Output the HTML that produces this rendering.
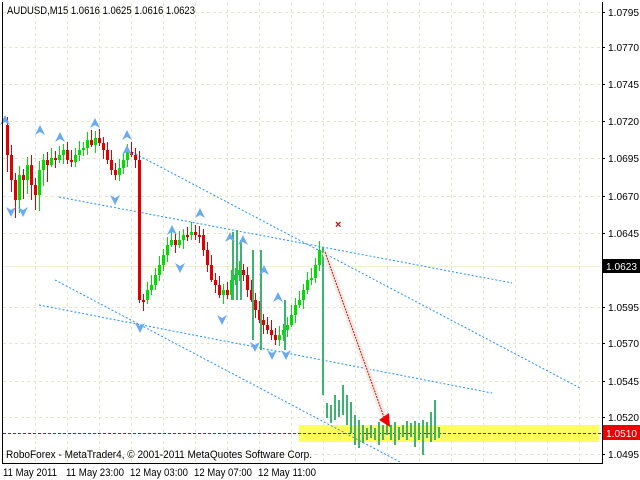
<!DOCTYPE html>
<html><head><meta charset="utf-8"><style>
body{margin:0;width:640px;height:480px;background:#fff;overflow:hidden;font-family:"Liberation Sans",sans-serif}
svg{position:absolute;left:0;top:0}
</style></head><body>
<svg id="s" width="640" height="480" xmlns="http://www.w3.org/2000/svg" font-family="Liberation Sans, sans-serif" font-size="11">
<rect x="0" y="0" width="640" height="480" fill="#fff"/>
<g id="grid" stroke="#e6e6c8" stroke-dasharray="3,3" stroke-width="1"></g>
<line x1="3" y1="266.5" x2="602" y2="266.5" stroke="#f0f0d0"/>
<rect x="299" y="425" width="300" height="17" fill="#ffff40" opacity="0.85"/>
<line x1="3" y1="433.5" x2="602" y2="433.5" stroke="#e00000" stroke-dasharray="3,2"/>
<g stroke="#1e90ff" stroke-dasharray="2,2" stroke-width="1" fill="none">
<line x1="132" y1="152" x2="580" y2="388"/>
<line x1="59" y1="197" x2="512" y2="283"/>
<line x1="39" y1="305" x2="492" y2="393"/>
<line x1="55" y1="280" x2="400" y2="462"/>
</g>
<g id="c"></g>
<line x1="325" y1="252" x2="385" y2="420" stroke="#eeeee0" stroke-width="6"/>
<line x1="325" y1="252" x2="385" y2="420" stroke="#e00030" stroke-dasharray="2,1"/>
<polygon points="379,420 390,427 389,413" fill="#f00000"/>
<text x="335" y="228" fill="#e00000" font-size="11" font-weight="bold">×</text>
<g id="fr" fill="#6aaaf0"></g>
<rect x="2" y="2" width="1" height="462" fill="#000"/>
<rect x="2" y="463" width="601" height="1" fill="#000"/>
<rect x="602" y="2" width="1" height="462" fill="#000"/>
<g id="ax" fill="#000" font-size="10.5"></g>
<rect x="603" y="259" width="37" height="14" fill="#000"/>
<text x="606" y="270" fill="#fff" font-size="10.5" textLength="31" lengthAdjust="spacingAndGlyphs">1.0623</text>
<rect x="603" y="425" width="37" height="15" fill="#f00000"/>
<text x="606" y="437" fill="#fff" font-size="10.5" textLength="31" lengthAdjust="spacingAndGlyphs">1.0510</text>
<text x="7" y="14" fill="#000" textLength="188" lengthAdjust="spacingAndGlyphs">AUDUSD,M15  1.0616 1.0625 1.0616 1.0623</text>
<text x="6" y="458" fill="#000" textLength="306" lengthAdjust="spacingAndGlyphs">RoboForex - MetaTrader4, © 2001-2011 MetaQuotes Software Corp.</text>
<text x="3" y="476" fill="#000" textLength="54" lengthAdjust="spacingAndGlyphs">11 May 2011</text>
<text x="66" y="476" fill="#000" textLength="58" lengthAdjust="spacingAndGlyphs">11 May 23:00</text>
<text x="130" y="476" fill="#000" textLength="58" lengthAdjust="spacingAndGlyphs">12 May 03:00</text>
<text x="194" y="476" fill="#000" textLength="58" lengthAdjust="spacingAndGlyphs">12 May 07:00</text>
<text x="258" y="476" fill="#000" textLength="58" lengthAdjust="spacingAndGlyphs">12 May 11:00</text>
</svg>
<script>
var NS="http://www.w3.org/2000/svg";
function el(p,t,a){var e=document.createElementNS(NS,t);for(var k in a)e.setAttribute(k,a[k]);p.appendChild(e);return e;}
var g=document.getElementById('grid');
for(var x=35;x<602;x+=32)el(g,'line',{x1:x+.5,y1:3,x2:x+.5,y2:463});
var ax=document.getElementById('ax');
var labels=[["1.0795",12],["1.0770",47],["1.0745",84],["1.0720",121],["1.0695",158],["1.0670",196],["1.0645",233],["1.0595",307],["1.0570",343],["1.0545",381],["1.0520",417],["1.0495",454]];
labels.forEach(function(l){el(g,'line',{x1:3,y1:l[1]+.5,x2:602,y2:l[1]+.5});el(ax,'rect',{x:602,y:l[1],width:3,height:1});var t=el(ax,'text',{x:608,y:l[1]+4,textLength:31,lengthAdjust:'spacingAndGlyphs'});t.textContent=l[0];});
var ys=[125,155,180,200,175,180,165,185,195,170,160,165,158,160,155,150,160,162,155,150,148,140,145,138,143,150,160,170,175,168,160,152,155,160,300,300,290,285,275,265,255,245,240,245,240,235,235,232,235,235,250,265,280,285,295,290,295,280,275,270,275,290,300,310,320,325,330,335,340,335,330,325,315,305,300,290,280,278,265,250];
var c=document.getElementById('c');
for(var i=1;i<ys.length;i++){var x=2+i*4;var o=ys[i-1],cl=ys[i];var up=cl<o;var col=up?'#00dd00':'#e00000';var t=Math.min(o,cl),b=Math.max(o,cl);if(b-t<2)b=t+2;
el(c,'rect',{x:x+1,y:t-6-(i*7%5),width:1,height:(b-t)+12+(i*3%6)+(i<12?10:0),fill:col});
el(c,'rect',{x:x,y:t,width:3,height:b-t,fill:col});}
var hb=[[322,247,395],[326,403,418],[330,405,423],[334,395,420],[338,400,417],[342,385,415],[346,395,425],[350,402,433],[354,415,445],[358,420,448],[362,425,443],[366,428,440],[370,425,438],[374,428,440],[378,422,445],[382,425,440],[386,423,435],[390,425,440],[394,422,445],[398,427,440],[402,425,437],[406,421,440],[410,423,437],[414,421,447],[418,423,440],[422,420,455],[426,422,438],[430,412,442],[434,400,440],[438,427,438]];
hb.forEach(function(h){el(c,'rect',{x:h[0],y:h[1],width:2,height:h[2]-h[1],fill:'#3cb371'});});
[[232,232,300],[236,230,300],[240,240,300],[252,250,340],[260,250,350],[284,300,350]].forEach(function(h){el(c,'rect',{x:h[0],y:h[1],width:2,height:h[2]-h[1],fill:'#3cb371'});});
var fr=document.getElementById('fr');
var up=[[5,120],[40,130],[60,137],[95,123],[127,135],[200,213],[172,230],[230,237],[243,240],[264,270],[278,297],[127,150]];
up.forEach(function(p){el(fr,'polygon',{points:(p[0]-5)+','+(p[1]+5)+' '+p[0]+','+(p[1]-5)+' '+(p[0]+5)+','+(p[1]+5)+' '+p[0]+','+(p[1]+2)});});
var dn=[[11,212],[23,212],[115,200],[140,328],[180,268],[222,320],[255,347],[272,355],[286,355]];
dn.forEach(function(p){el(fr,'polygon',{points:(p[0]-5)+','+(p[1]-5)+' '+p[0]+','+(p[1]+5)+' '+(p[0]+5)+','+(p[1]-5)+' '+p[0]+','+(p[1]-2)});});
</script>
</body></html>
